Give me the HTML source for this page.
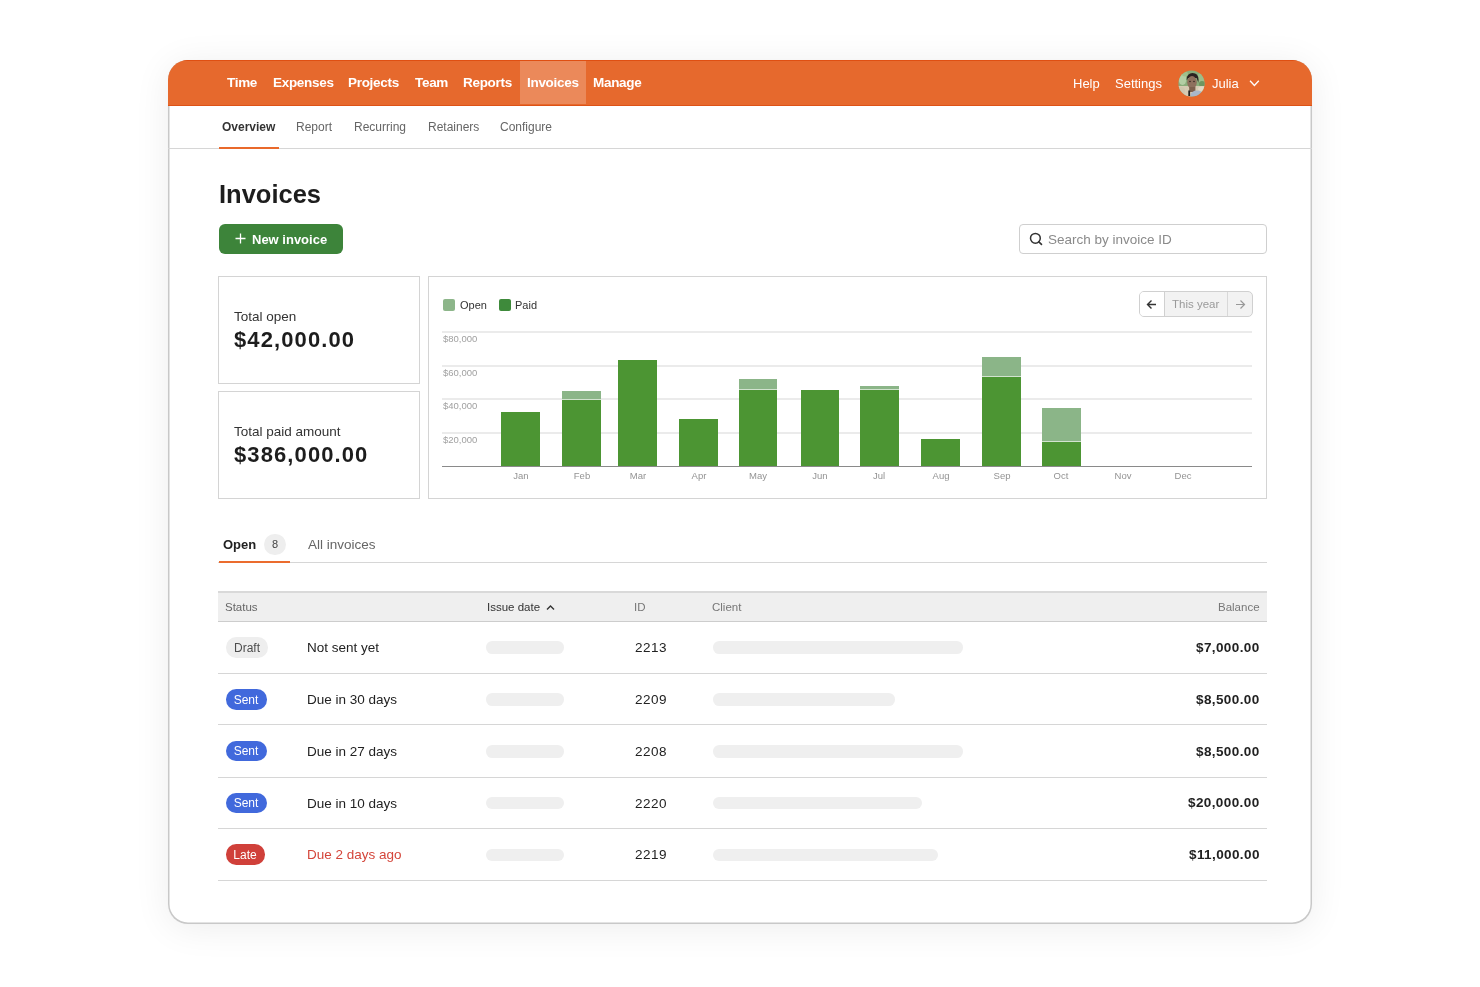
<!DOCTYPE html>
<html><head><meta charset="utf-8"><title>Invoices</title>
<style>
html,body{margin:0;padding:0;background:#fff;}
body{width:1480px;height:987px;position:relative;overflow:hidden;font-family:"Liberation Sans", sans-serif;}
</style></head><body>
<div style="position:absolute;left:168px;top:60px;width:1144px;height:864px;border-radius:20px;background:#fff;box-shadow:inset 0 0 0 1.5px #c8c8c8, 0 0 3px rgba(0,0,0,0.02), 0 4px 36px rgba(0,0,0,0.075);overflow:hidden">
<div style="position:absolute;left:0;top:0;width:1144px;height:46px;background:#E6692D;border-top:1px solid #DF4F12;border-bottom:1px solid #DD5216;box-sizing:border-box"></div>
</div>
<div style="position:absolute;left:520px;top:61px;width:66px;height:43px;background:#EB895A"></div>
<div style="position:absolute;left:226.5px;top:76.17px;font-size:13.5px;line-height:13.5px;color:#fff;font-weight:bold;white-space:nowrap;will-change:transform;letter-spacing:-0.3px">Time</div>
<div style="position:absolute;left:272.5px;top:76.17px;font-size:13.5px;line-height:13.5px;color:#fff;font-weight:bold;white-space:nowrap;will-change:transform;letter-spacing:-0.3px">Expenses</div>
<div style="position:absolute;left:347.5px;top:76.17px;font-size:13.5px;line-height:13.5px;color:#fff;font-weight:bold;white-space:nowrap;will-change:transform;letter-spacing:-0.3px">Projects</div>
<div style="position:absolute;left:415.0px;top:76.17px;font-size:13.5px;line-height:13.5px;color:#fff;font-weight:bold;white-space:nowrap;will-change:transform;letter-spacing:-0.3px">Team</div>
<div style="position:absolute;left:462.5px;top:76.17px;font-size:13.5px;line-height:13.5px;color:#fff;font-weight:bold;white-space:nowrap;will-change:transform;letter-spacing:-0.3px">Reports</div>
<div style="position:absolute;left:527.0px;top:76.17px;font-size:13.5px;line-height:13.5px;color:#fff;font-weight:bold;white-space:nowrap;will-change:transform;letter-spacing:-0.3px">Invoices</div>
<div style="position:absolute;left:592.5px;top:76.17px;font-size:13.5px;line-height:13.5px;color:#fff;font-weight:bold;white-space:nowrap;will-change:transform;letter-spacing:-0.3px">Manage</div>
<div style="position:absolute;left:1073.3px;top:77.20px;font-size:13px;line-height:13px;color:#fff;font-weight:normal;white-space:nowrap;will-change:transform;">Help</div>
<div style="position:absolute;left:1114.5px;top:77.20px;font-size:13px;line-height:13px;color:#fff;font-weight:normal;white-space:nowrap;will-change:transform;">Settings</div>
<div style="position:absolute;left:1212px;top:77.20px;font-size:13px;line-height:13px;color:#fff;font-weight:normal;white-space:nowrap;will-change:transform;">Julia</div>
<svg style="position:absolute;left:1177.5px;top:70px" width="27" height="27" viewBox="0 0 27 27"><defs><clipPath id="av"><circle cx="13.5" cy="13.5" r="13.1"/></clipPath><filter id="bl" x="-20%" y="-20%" width="140%" height="140%"><feGaussianBlur stdDeviation="0.45"/></filter></defs><g clip-path="url(#av)"><rect width="27" height="27" fill="#8aad7b"/><g filter="url(#bl)"><ellipse cx="4.5" cy="9" rx="4" ry="6" fill="#b3cea4"/><ellipse cx="7" cy="4" rx="3" ry="2.5" fill="#9fc08c"/><ellipse cx="23" cy="8" rx="4" ry="5" fill="#9dbd8a"/><ellipse cx="24" cy="14" rx="3" ry="3" fill="#6e9660"/><rect x="0" y="16" width="27" height="12" fill="#d6cbb3"/><ellipse cx="3" cy="21" rx="4" ry="4" fill="#cfc6ad"/><ellipse cx="24" cy="19" rx="4" ry="2.5" fill="#e0d8c4"/><path d="M8.6 9.5 Q9 3 14.5 3 Q20.6 3.2 20.6 10 L20.3 12.5 L18.6 8 L10 8 L9 10.5 Z" fill="#2b2420"/><ellipse cx="14" cy="12.3" rx="4.8" ry="6.2" fill="#8e705d"/><rect x="11.2" y="17" width="6.2" height="5" fill="#7d604d"/><ellipse cx="19" cy="25.5" rx="6.5" ry="5" fill="#a9b8cb"/><rect x="10.3" y="20.5" width="1.8" height="5.5" fill="#222"/></g><circle cx="12" cy="11.6" r="0.75" fill="#2a201c"/><circle cx="16" cy="11.6" r="0.75" fill="#2a201c"/></g></svg>
<svg style="position:absolute;left:1249px;top:79px" width="12" height="9" viewBox="0 0 12 9"><path d="M1 1.7 L5.4 6.5 L9.8 1.7" fill="none" stroke="#fff" stroke-width="1.3"/></svg>
<div style="position:absolute;left:222.4px;top:120.54px;font-size:12px;line-height:12px;color:#333;font-weight:bold;white-space:nowrap;will-change:transform;">Overview</div>
<div style="position:absolute;left:295.7px;top:120.54px;font-size:12px;line-height:12px;color:#666;font-weight:normal;white-space:nowrap;will-change:transform;">Report</div>
<div style="position:absolute;left:354.3px;top:120.54px;font-size:12px;line-height:12px;color:#666;font-weight:normal;white-space:nowrap;will-change:transform;">Recurring</div>
<div style="position:absolute;left:428.3px;top:120.54px;font-size:12px;line-height:12px;color:#666;font-weight:normal;white-space:nowrap;will-change:transform;">Retainers</div>
<div style="position:absolute;left:500.2px;top:120.54px;font-size:12px;line-height:12px;color:#666;font-weight:normal;white-space:nowrap;will-change:transform;">Configure</div>
<div style="position:absolute;left:168px;top:148px;width:1144px;height:1px;background:#d6d6d6"></div>
<div style="position:absolute;left:218.5px;top:147px;width:60px;height:2px;background:#E9692B"></div>
<div style="position:absolute;left:219px;top:182.41px;font-size:25.5px;line-height:25.5px;color:#1d1d1d;font-weight:bold;white-space:nowrap;will-change:transform;">Invoices</div>
<div style="position:absolute;left:218.5px;top:224px;width:124.5px;height:30px;border-radius:6px;background:#3D843A"></div>
<svg style="position:absolute;left:235px;top:233px" width="11" height="11" viewBox="0 0 11 11"><path d="M5.5 0.5 V10.5 M0.5 5.5 H10.5" stroke="#fff" stroke-width="1.3"/></svg>
<div style="position:absolute;left:251.6px;top:232.80px;font-size:13px;line-height:13px;color:#fff;font-weight:bold;white-space:nowrap;will-change:transform;">New invoice</div>
<div style="position:absolute;left:1019px;top:224px;width:248px;height:30px;border-radius:4px;border:1px solid #cfcfcf;box-sizing:border-box;background:#fff"></div>
<svg style="position:absolute;left:1029px;top:232px" width="15" height="14" viewBox="0 0 15 14"><circle cx="6.4" cy="6.3" r="4.9" fill="none" stroke="#333" stroke-width="1.5"/><path d="M9.8 9.8 L12.5 12.4" stroke="#333" stroke-width="1.6" stroke-linecap="round"/></svg>
<div style="position:absolute;left:1048px;top:232.77px;font-size:13.5px;line-height:13.5px;color:#8a8a8a;font-weight:normal;white-space:nowrap;will-change:transform;">Search by invoice ID</div>
<div style="position:absolute;left:218px;top:276px;width:202px;height:108px;border:1px solid #d4d4d4;box-sizing:border-box"></div>
<div style="position:absolute;left:234.3px;top:310.07px;font-size:13.5px;line-height:13.5px;color:#333;font-weight:normal;white-space:nowrap;will-change:transform;">Total open</div>
<div style="position:absolute;left:234px;top:328.58px;font-size:22px;line-height:22px;color:#1d1d1d;font-weight:bold;white-space:nowrap;will-change:transform;letter-spacing:1.1px">$42,000.00</div>
<div style="position:absolute;left:218px;top:391px;width:202px;height:108px;border:1px solid #d4d4d4;box-sizing:border-box"></div>
<div style="position:absolute;left:234.3px;top:425.07px;font-size:13.5px;line-height:13.5px;color:#333;font-weight:normal;white-space:nowrap;will-change:transform;">Total paid amount</div>
<div style="position:absolute;left:234px;top:443.58px;font-size:22px;line-height:22px;color:#1d1d1d;font-weight:bold;white-space:nowrap;will-change:transform;letter-spacing:1.1px">$386,000.00</div>
<div style="position:absolute;left:428px;top:276px;width:839px;height:223px;border:1px solid #d4d4d4;box-sizing:border-box"></div>
<div style="position:absolute;left:443px;top:299.2px;width:12px;height:12px;background:#8DB68A;border-radius:2px"></div>
<div style="position:absolute;left:460px;top:299.99px;font-size:11px;line-height:11px;color:#333;font-weight:normal;white-space:nowrap;will-change:transform;">Open</div>
<div style="position:absolute;left:499px;top:299.2px;width:12px;height:12px;background:#3E8A3B;border-radius:2px"></div>
<div style="position:absolute;left:515px;top:299.99px;font-size:11px;line-height:11px;color:#333;font-weight:normal;white-space:nowrap;will-change:transform;">Paid</div>
<div style="position:absolute;left:442px;top:331px;width:810px;height:1.5px;background:#ebebeb"></div>
<div style="position:absolute;left:443px;top:334.36px;font-size:9.5px;line-height:9.5px;color:#a0a0a0;font-weight:normal;white-space:nowrap;will-change:transform;">$80,000</div>
<div style="position:absolute;left:442px;top:365px;width:810px;height:1.5px;background:#ebebeb"></div>
<div style="position:absolute;left:443px;top:368.36px;font-size:9.5px;line-height:9.5px;color:#a0a0a0;font-weight:normal;white-space:nowrap;will-change:transform;">$60,000</div>
<div style="position:absolute;left:442px;top:398px;width:810px;height:1.5px;background:#ebebeb"></div>
<div style="position:absolute;left:443px;top:401.36px;font-size:9.5px;line-height:9.5px;color:#a0a0a0;font-weight:normal;white-space:nowrap;will-change:transform;">$40,000</div>
<div style="position:absolute;left:442px;top:432px;width:810px;height:1.5px;background:#ebebeb"></div>
<div style="position:absolute;left:443px;top:435.36px;font-size:9.5px;line-height:9.5px;color:#a0a0a0;font-weight:normal;white-space:nowrap;will-change:transform;">$20,000</div>
<div style="position:absolute;left:442px;top:465.5px;width:810px;height:1.5px;background:#8a8a8a"></div>
<div style="position:absolute;left:501px;top:412px;width:39px;height:54px;background:#4C9533"></div>
<div style="position:absolute;left:320.5px;width:400px;text-align:center;top:471.16px;font-size:9.5px;line-height:9.5px;color:#939393;font-weight:normal;white-space:nowrap;will-change:transform;">Jan</div>
<div style="position:absolute;left:562.3px;top:391px;width:38.700000000000045px;height:8px;background:#8BB588"></div>
<div style="position:absolute;left:562.3px;top:399px;width:38.700000000000045px;height:1px;background:#d2e3cf"></div>
<div style="position:absolute;left:562.3px;top:400px;width:38.700000000000045px;height:66px;background:#4C9533"></div>
<div style="position:absolute;left:381.65px;width:400px;text-align:center;top:471.16px;font-size:9.5px;line-height:9.5px;color:#939393;font-weight:normal;white-space:nowrap;will-change:transform;">Feb</div>
<div style="position:absolute;left:618.2px;top:360px;width:38.799999999999955px;height:106px;background:#4C9533"></div>
<div style="position:absolute;left:437.6px;width:400px;text-align:center;top:471.16px;font-size:9.5px;line-height:9.5px;color:#939393;font-weight:normal;white-space:nowrap;will-change:transform;">Mar</div>
<div style="position:absolute;left:679.3px;top:419.3px;width:38.90000000000009px;height:46.69999999999999px;background:#4C9533"></div>
<div style="position:absolute;left:498.75px;width:400px;text-align:center;top:471.16px;font-size:9.5px;line-height:9.5px;color:#939393;font-weight:normal;white-space:nowrap;will-change:transform;">Apr</div>
<div style="position:absolute;left:738.6px;top:379px;width:38.799999999999955px;height:10px;background:#8BB588"></div>
<div style="position:absolute;left:738.6px;top:389px;width:38.799999999999955px;height:1px;background:#d2e3cf"></div>
<div style="position:absolute;left:738.6px;top:390px;width:38.799999999999955px;height:76px;background:#4C9533"></div>
<div style="position:absolute;left:558.0px;width:400px;text-align:center;top:471.16px;font-size:9.5px;line-height:9.5px;color:#939393;font-weight:normal;white-space:nowrap;will-change:transform;">May</div>
<div style="position:absolute;left:800.7px;top:389.7px;width:38.59999999999991px;height:76.30000000000001px;background:#4C9533"></div>
<div style="position:absolute;left:620.0px;width:400px;text-align:center;top:471.16px;font-size:9.5px;line-height:9.5px;color:#939393;font-weight:normal;white-space:nowrap;will-change:transform;">Jun</div>
<div style="position:absolute;left:860.2px;top:385.5px;width:38.5px;height:3.5px;background:#8BB588"></div>
<div style="position:absolute;left:860.2px;top:389px;width:38.5px;height:1px;background:#d2e3cf"></div>
<div style="position:absolute;left:860.2px;top:390px;width:38.5px;height:76px;background:#4C9533"></div>
<div style="position:absolute;left:679.45px;width:400px;text-align:center;top:471.16px;font-size:9.5px;line-height:9.5px;color:#939393;font-weight:normal;white-space:nowrap;will-change:transform;">Jul</div>
<div style="position:absolute;left:921px;top:439px;width:39px;height:27px;background:#4C9533"></div>
<div style="position:absolute;left:740.5px;width:400px;text-align:center;top:471.16px;font-size:9.5px;line-height:9.5px;color:#939393;font-weight:normal;white-space:nowrap;will-change:transform;">Aug</div>
<div style="position:absolute;left:982.3px;top:356.6px;width:38.700000000000045px;height:19.299999999999955px;background:#8BB588"></div>
<div style="position:absolute;left:982.3px;top:375.9px;width:38.700000000000045px;height:1px;background:#d2e3cf"></div>
<div style="position:absolute;left:982.3px;top:376.9px;width:38.700000000000045px;height:89.10000000000002px;background:#4C9533"></div>
<div style="position:absolute;left:801.65px;width:400px;text-align:center;top:471.16px;font-size:9.5px;line-height:9.5px;color:#939393;font-weight:normal;white-space:nowrap;will-change:transform;">Sep</div>
<div style="position:absolute;left:1041.5px;top:407.5px;width:39.200000000000045px;height:33.30000000000001px;background:#8BB588"></div>
<div style="position:absolute;left:1041.5px;top:440.8px;width:39.200000000000045px;height:1px;background:#d2e3cf"></div>
<div style="position:absolute;left:1041.5px;top:441.8px;width:39.200000000000045px;height:24.19999999999999px;background:#4C9533"></div>
<div style="position:absolute;left:861.0999999999999px;width:400px;text-align:center;top:471.16px;font-size:9.5px;line-height:9.5px;color:#939393;font-weight:normal;white-space:nowrap;will-change:transform;">Oct</div>
<div style="position:absolute;left:923.25px;width:400px;text-align:center;top:471.16px;font-size:9.5px;line-height:9.5px;color:#939393;font-weight:normal;white-space:nowrap;will-change:transform;">Nov</div>
<div style="position:absolute;left:982.5px;width:400px;text-align:center;top:471.16px;font-size:9.5px;line-height:9.5px;color:#939393;font-weight:normal;white-space:nowrap;will-change:transform;">Dec</div>
<div style="position:absolute;left:1139px;top:291px;width:114px;height:25.5px;border:1px solid #d0d0d0;border-radius:5px;box-sizing:border-box;background:#f2f2f2;overflow:hidden"><div style="position:absolute;left:0;top:0;width:24px;height:100%;background:#fff;border-right:1px solid #d0d0d0"></div><div style="position:absolute;left:87px;top:0;width:1px;height:100%;background:#d8d8d8"></div></div>
<svg style="position:absolute;left:1146px;top:298.5px" width="11" height="11" viewBox="0 0 11 11"><path d="M10 5.5 H1.5 M5.5 1.5 L1.5 5.5 L5.5 9.5" fill="none" stroke="#333" stroke-width="1.4"/></svg>
<svg style="position:absolute;left:1235px;top:298.5px" width="11" height="11" viewBox="0 0 11 11"><path d="M1 5.5 H9.5 M5.5 1.5 L9.5 5.5 L5.5 9.5" fill="none" stroke="#999" stroke-width="1.2"/></svg>
<div style="position:absolute;left:1172.4px;top:299.07px;font-size:11.5px;line-height:11.5px;color:#9a9a9a;font-weight:normal;white-space:nowrap;will-change:transform;">This year</div>
<div style="position:absolute;left:222.8px;top:537.70px;font-size:13px;line-height:13px;color:#222;font-weight:bold;white-space:nowrap;will-change:transform;">Open</div>
<div style="position:absolute;left:264px;top:534px;width:22px;height:21px;background:#eeeeee;border-radius:11px"></div>
<div style="position:absolute;left:75px;width:400px;text-align:center;top:538.69px;font-size:11px;line-height:11px;color:#444;font-weight:normal;white-space:nowrap;will-change:transform;">8</div>
<div style="position:absolute;left:308.3px;top:537.87px;font-size:13.5px;line-height:13.5px;color:#666;font-weight:normal;white-space:nowrap;will-change:transform;">All invoices</div>
<div style="position:absolute;left:218px;top:562px;width:1049px;height:1px;background:#d6d6d6"></div>
<div style="position:absolute;left:218.5px;top:561px;width:71.5px;height:2px;background:#EB6C2E"></div>
<div style="position:absolute;left:218px;top:591px;width:1049px;height:31px;background:#efefef;border-top:2px solid #d9d9d9;border-bottom:1px solid #cdcdcd;box-sizing:border-box"></div>
<div style="position:absolute;left:225px;top:601.87px;font-size:11.5px;line-height:11.5px;color:#666;font-weight:normal;white-space:nowrap;will-change:transform;">Status</div>
<div style="position:absolute;left:487px;top:601.87px;font-size:11.5px;line-height:11.5px;color:#333;font-weight:normal;white-space:nowrap;will-change:transform;">Issue date</div>
<svg style="position:absolute;left:546px;top:604px" width="9" height="7" viewBox="0 0 9 7"><path d="M1 5.5 L4.5 2 L8 5.5" fill="none" stroke="#333" stroke-width="1.4"/></svg>
<div style="position:absolute;left:634px;top:601.87px;font-size:11.5px;line-height:11.5px;color:#777;font-weight:normal;white-space:nowrap;will-change:transform;">ID</div>
<div style="position:absolute;left:712px;top:601.87px;font-size:11.5px;line-height:11.5px;color:#777;font-weight:normal;white-space:nowrap;will-change:transform;">Client</div>
<div style="position:absolute;right:220.4000000000001px;top:601.87px;font-size:11.5px;line-height:11.5px;color:#777;font-weight:normal;white-space:nowrap;will-change:transform;">Balance</div>
<div style="position:absolute;left:225.5px;top:637.0px;width:42px;height:20.6px;background:#eeeeee;border-radius:10.2px"></div>
<div style="position:absolute;left:46.5px;width:400px;text-align:center;top:641.54px;font-size:12px;line-height:12px;color:#4d4d4d;font-weight:normal;white-space:nowrap;will-change:transform;">Draft</div>
<div style="position:absolute;left:306.5px;top:641.07px;font-size:13.5px;line-height:13.5px;color:#222;font-weight:normal;white-space:nowrap;will-change:transform;">Not sent yet</div>
<div style="position:absolute;left:486.2px;top:641.0999999999999px;width:77.5px;height:12.6px;background:#efefef;border-radius:6.3px"></div>
<div style="position:absolute;left:635.3px;top:641.07px;font-size:13.5px;line-height:13.5px;color:#222;font-weight:normal;white-space:nowrap;will-change:transform;letter-spacing:0.5px">2213</div>
<div style="position:absolute;left:713.4px;top:641.0999999999999px;width:249.39999999999998px;height:12.6px;background:#efefef;border-radius:6.3px"></div>
<div style="position:absolute;right:220.4000000000001px;top:640.87px;font-size:13.5px;line-height:13.5px;color:#222;font-weight:bold;white-space:nowrap;will-change:transform;letter-spacing:0.4px">$7,000.00</div>
<div style="position:absolute;left:218px;top:672.5px;width:1049px;height:1px;background:#d6d6d6"></div>
<div style="position:absolute;left:225.5px;top:689.1px;width:41px;height:20.6px;background:#4169DC;border-radius:10.2px"></div>
<div style="position:absolute;left:46.0px;width:400px;text-align:center;top:693.64px;font-size:12px;line-height:12px;color:#fff;font-weight:normal;white-space:nowrap;will-change:transform;">Sent</div>
<div style="position:absolute;left:306.5px;top:693.17px;font-size:13.5px;line-height:13.5px;color:#222;font-weight:normal;white-space:nowrap;will-change:transform;">Due in 30 days</div>
<div style="position:absolute;left:486.2px;top:693.1999999999999px;width:77.5px;height:12.6px;background:#efefef;border-radius:6.3px"></div>
<div style="position:absolute;left:635.3px;top:693.17px;font-size:13.5px;line-height:13.5px;color:#222;font-weight:normal;white-space:nowrap;will-change:transform;letter-spacing:0.5px">2209</div>
<div style="position:absolute;left:713.4px;top:693.1999999999999px;width:181.60000000000002px;height:12.6px;background:#efefef;border-radius:6.3px"></div>
<div style="position:absolute;right:220.4000000000001px;top:692.97px;font-size:13.5px;line-height:13.5px;color:#222;font-weight:bold;white-space:nowrap;will-change:transform;letter-spacing:0.4px">$8,500.00</div>
<div style="position:absolute;left:218px;top:723.5px;width:1049px;height:1px;background:#d6d6d6"></div>
<div style="position:absolute;left:225.5px;top:740.9000000000001px;width:41px;height:20.6px;background:#4169DC;border-radius:10.2px"></div>
<div style="position:absolute;left:46.0px;width:400px;text-align:center;top:745.44px;font-size:12px;line-height:12px;color:#fff;font-weight:normal;white-space:nowrap;will-change:transform;">Sent</div>
<div style="position:absolute;left:306.5px;top:744.97px;font-size:13.5px;line-height:13.5px;color:#222;font-weight:normal;white-space:nowrap;will-change:transform;">Due in 27 days</div>
<div style="position:absolute;left:486.2px;top:745.0px;width:77.5px;height:12.6px;background:#efefef;border-radius:6.3px"></div>
<div style="position:absolute;left:635.3px;top:744.97px;font-size:13.5px;line-height:13.5px;color:#222;font-weight:normal;white-space:nowrap;will-change:transform;letter-spacing:0.5px">2208</div>
<div style="position:absolute;left:713.4px;top:745.0px;width:249.39999999999998px;height:12.6px;background:#efefef;border-radius:6.3px"></div>
<div style="position:absolute;right:220.4000000000001px;top:744.77px;font-size:13.5px;line-height:13.5px;color:#222;font-weight:bold;white-space:nowrap;will-change:transform;letter-spacing:0.4px">$8,500.00</div>
<div style="position:absolute;left:218px;top:776.5px;width:1049px;height:1px;background:#d6d6d6"></div>
<div style="position:absolute;left:225.5px;top:792.5px;width:41px;height:20.6px;background:#4169DC;border-radius:10.2px"></div>
<div style="position:absolute;left:46.0px;width:400px;text-align:center;top:797.04px;font-size:12px;line-height:12px;color:#fff;font-weight:normal;white-space:nowrap;will-change:transform;">Sent</div>
<div style="position:absolute;left:306.5px;top:796.57px;font-size:13.5px;line-height:13.5px;color:#222;font-weight:normal;white-space:nowrap;will-change:transform;">Due in 10 days</div>
<div style="position:absolute;left:486.2px;top:796.5999999999999px;width:77.5px;height:12.6px;background:#efefef;border-radius:6.3px"></div>
<div style="position:absolute;left:635.3px;top:796.57px;font-size:13.5px;line-height:13.5px;color:#222;font-weight:normal;white-space:nowrap;will-change:transform;letter-spacing:0.5px">2220</div>
<div style="position:absolute;left:713.4px;top:796.5999999999999px;width:208.30000000000007px;height:12.6px;background:#efefef;border-radius:6.3px"></div>
<div style="position:absolute;right:220.4000000000001px;top:796.37px;font-size:13.5px;line-height:13.5px;color:#222;font-weight:bold;white-space:nowrap;will-change:transform;letter-spacing:0.4px">$20,000.00</div>
<div style="position:absolute;left:218px;top:827.5px;width:1049px;height:1px;background:#d6d6d6"></div>
<div style="position:absolute;left:225.5px;top:844.4000000000001px;width:39.5px;height:20.6px;background:#D0403A;border-radius:10.2px"></div>
<div style="position:absolute;left:45.25px;width:400px;text-align:center;top:848.94px;font-size:12px;line-height:12px;color:#fff;font-weight:normal;white-space:nowrap;will-change:transform;">Late</div>
<div style="position:absolute;left:306.5px;top:848.47px;font-size:13.5px;line-height:13.5px;color:#D4453A;font-weight:normal;white-space:nowrap;will-change:transform;">Due 2 days ago</div>
<div style="position:absolute;left:486.2px;top:848.5px;width:77.5px;height:12.6px;background:#efefef;border-radius:6.3px"></div>
<div style="position:absolute;left:635.3px;top:848.47px;font-size:13.5px;line-height:13.5px;color:#222;font-weight:normal;white-space:nowrap;will-change:transform;letter-spacing:0.5px">2219</div>
<div style="position:absolute;left:713.4px;top:848.5px;width:225.10000000000002px;height:12.6px;background:#efefef;border-radius:6.3px"></div>
<div style="position:absolute;right:220.4000000000001px;top:848.27px;font-size:13.5px;line-height:13.5px;color:#222;font-weight:bold;white-space:nowrap;will-change:transform;letter-spacing:0.4px">$11,000.00</div>
<div style="position:absolute;left:218px;top:879.5px;width:1049px;height:1px;background:#d6d6d6"></div>
</body></html>
